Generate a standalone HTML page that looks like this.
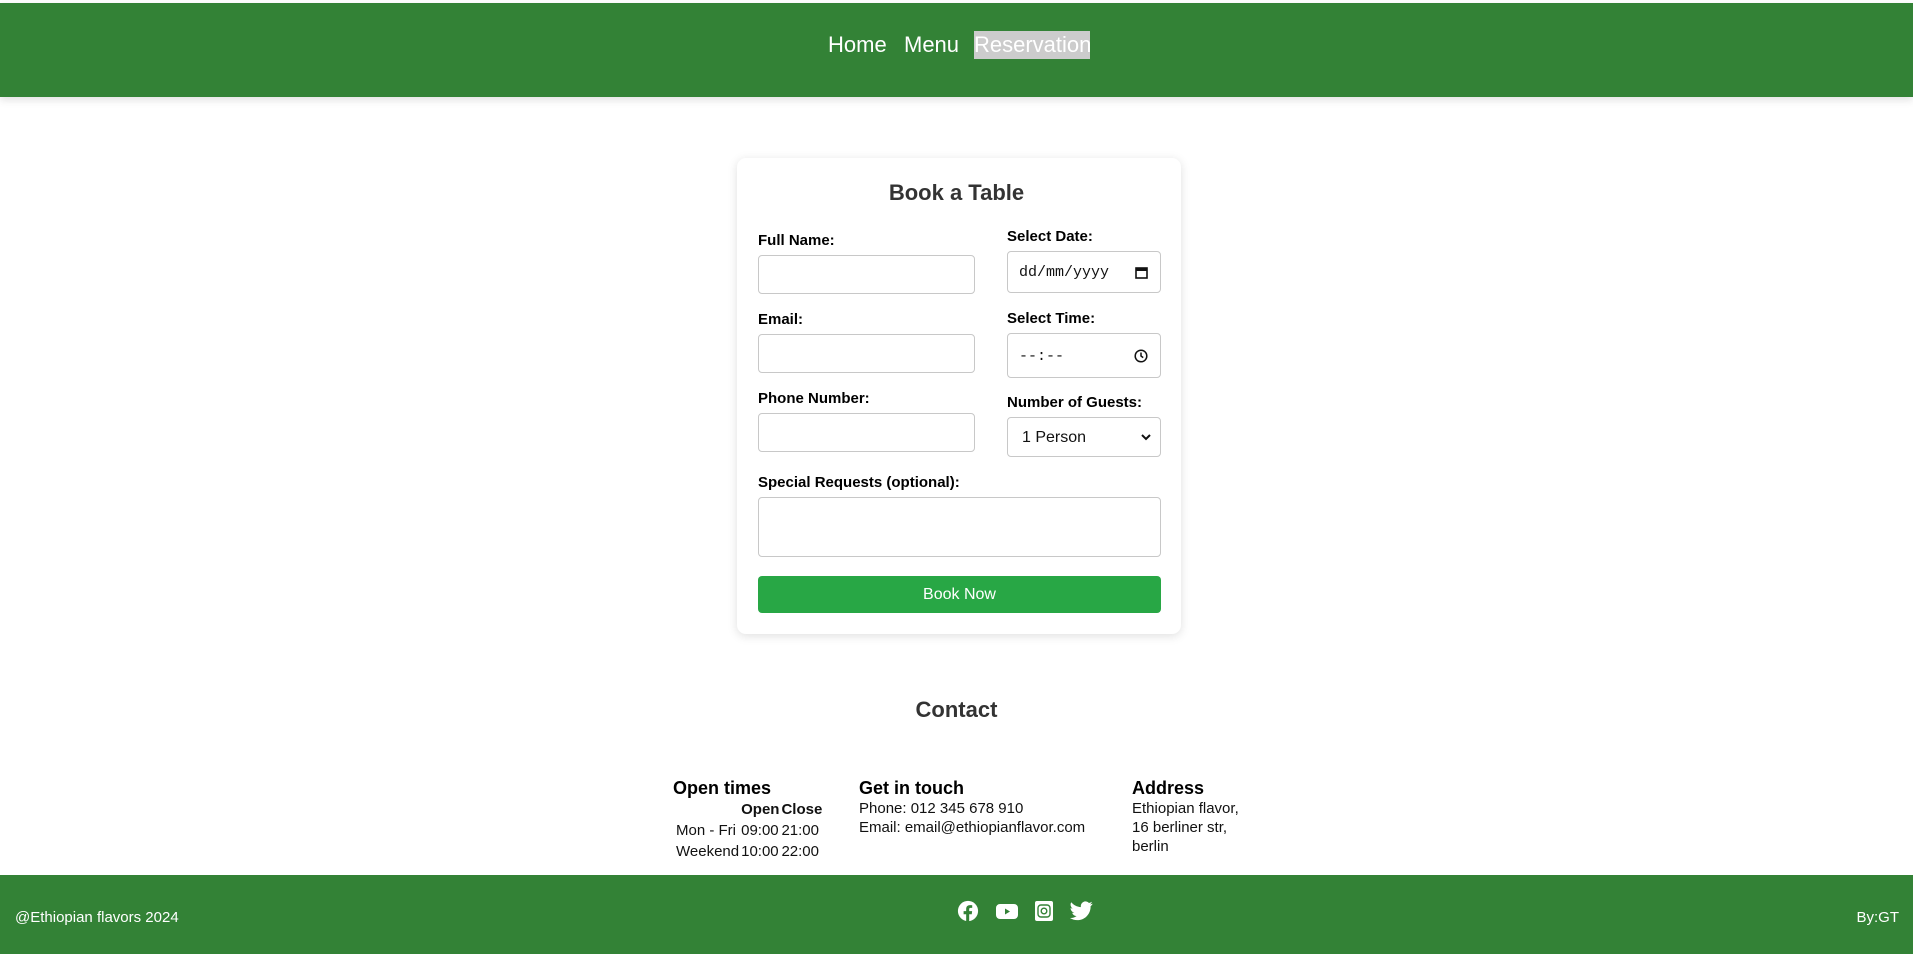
<!DOCTYPE html>
<html><head><meta charset="utf-8">
<style>
*{box-sizing:border-box;margin:0;padding:0}
html,body{width:1913px;height:954px;overflow:hidden;background:#fff;font-family:"Liberation Sans",Arial,sans-serif;}
.hdr{position:absolute;left:0;top:3px;width:1913px;height:94px;background:#338236;box-shadow:0 3px 8px rgba(0,0,0,0.12)}
.nav a{position:absolute;top:31px;height:28px;line-height:28px;font-size:22px;color:#fff;text-decoration:none}
.card{position:absolute;left:737px;top:158px;width:444px;height:476px;background:#fff;border-radius:9px;box-shadow:0 2px 10px rgba(0,0,0,0.13)}
h2{position:absolute;width:100%;text-align:center;font-size:22px;font-weight:bold;color:#333}
.lbl{position:absolute;font-size:15px;font-weight:bold;color:#000}
.inp{position:absolute;border:1px solid #c8c8c8;border-radius:4px;background:#fff}
.btn{position:absolute;left:758px;top:576px;width:403px;height:37px;background:#28a745;border-radius:4px;color:#fff;font-size:16px;text-align:center;line-height:37px}
.c{position:absolute;font-size:15px;color:#111;line-height:19px}
.c b{font-size:18px;display:block;line-height:22px;color:#000}
td,th{padding:0 1px}
.ftr{position:absolute;left:0;top:875px;width:1913px;height:79px;background:#338236;color:#fff;font-size:15px}
</style></head><body>
<div class="hdr"></div>
<div class="nav">
<a style="left:828px">Home</a>
<a style="left:904px">Menu</a>
<a style="left:974px;width:116px;background:#ccc;text-align:center">Reservation</a>
</div>

<div class="card"></div>
<h2 style="top:180px;left:0;width:1913px">Book a Table</h2>
<div class="lbl" style="left:758px;top:232px">Full Name:</div>
<div class="inp" style="left:758px;top:255px;width:217px;height:39px"></div>
<div class="lbl" style="left:758px;top:311px">Email:</div>
<div class="inp" style="left:758px;top:334px;width:217px;height:39px"></div>
<div class="lbl" style="left:758px;top:390px">Phone Number:</div>
<div class="inp" style="left:758px;top:413px;width:217px;height:39px"></div>

<div class="lbl" style="left:1007px;top:228px">Select Date:</div>
<div class="inp" style="left:1007px;top:251px;width:154px;height:42px;font-family:'Liberation Mono',monospace;font-size:15px;line-height:42px;padding-left:11px;color:#111">dd/mm/yyyy
<svg style="position:absolute;right:12px;top:14px" width="13" height="13" viewBox="0 0 13 13"><rect x="1" y="2" width="11" height="10" fill="none" stroke="#111" stroke-width="1.6"/><rect x="1" y="2" width="11" height="3" fill="#111"/></svg></div>
<div class="lbl" style="left:1007px;top:310px">Select Time:</div>
<div class="inp" style="left:1007px;top:333px;width:154px;height:45px;font-family:'Liberation Mono',monospace;font-size:15px;line-height:45px;padding-left:11px;color:#111">--:--
<svg style="position:absolute;right:12px;top:15px" width="14" height="14" viewBox="0 0 14 14"><circle cx="7" cy="7" r="5.8" fill="none" stroke="#111" stroke-width="1.5"/><path d="M7 3.5V7l2.2 1.6" fill="none" stroke="#111" stroke-width="1.5"/></svg></div>
<div class="lbl" style="left:1007px;top:394px">Number of Guests:</div>
<div class="inp" style="left:1007px;top:417px;width:154px;height:40px;font-size:16px;line-height:40px;padding-left:14px;color:#111">1 Person
<svg style="position:absolute;right:9px;top:15px" width="10" height="8" viewBox="0 0 10 8"><path d="M1 2l4 4 4-4" fill="none" stroke="#111" stroke-width="2"/></svg></div>

<div class="lbl" style="left:758px;top:474px">Special Requests (optional):</div>
<div class="inp" style="left:758px;top:497px;width:403px;height:60px"></div>
<div class="btn">Book Now</div>

<h2 style="top:697px;left:0;width:1913px">Contact</h2>
<div class="c" style="left:673px;top:777px"><b>Open times</b>
<table style="border-collapse:collapse;font-size:15px;line-height:21px;margin-left:2px">
<tr><th></th><th style="font-size:15px">Open</th><th style="font-size:15px">Close</th></tr>
<tr><td>Mon - Fri</td><td>09:00</td><td>21:00</td></tr>
<tr><td>Weekend</td><td>10:00</td><td>22:00</td></tr></table></div>
<div class="c" style="left:859px;top:777px"><b>Get in touch</b>Phone: 012 345 678 910<br>Email: email@ethiopianflavor.com</div>
<div class="c" style="left:1132px;top:777px"><b>Address</b>Ethiopian flavor,<br>16 berliner str,<br>berlin</div>

<div class="ftr">
<div style="position:absolute;left:15px;top:34px">@Ethiopian flavors 2024</div>
<div style="position:absolute;right:14px;top:34px">By:GT</div>
<svg style="position:absolute;left:957px;top:25px" width="22" height="22" viewBox="0 0 24 24"><circle cx="12" cy="12" r="11" fill="#fff"/><path d="M13.3 24v-8.5h2.8l.4-3.3h-3.2v-2c0-.9.3-1.6 1.6-1.6h1.7V5.7c-.3 0-1.3-.1-2.5-.1-2.5 0-4.1 1.5-4.1 4.2v2.4H7.2v3.3H10V24z" fill="#338236"/></svg>
<svg style="position:absolute;left:996px;top:26px" width="22" height="20" viewBox="0 0 22 20"><rect x="0" y="3" width="22" height="15" rx="4" fill="#fff"/><path d="M9 7.5v6l5-3z" fill="#338236"/></svg>
<svg style="position:absolute;left:1034px;top:25px" width="20" height="22" viewBox="0 0 20 22"><rect x="1" y="1" width="18" height="20" rx="2" fill="#fff"/><rect x="4" y="5" width="12" height="12" rx="3" fill="none" stroke="#338236" stroke-width="1.4"/><circle cx="10" cy="11" r="2.8" fill="none" stroke="#338236" stroke-width="1.4"/></svg>
<svg style="position:absolute;left:1070px;top:26px" width="23" height="20" viewBox="0 0 24 20"><path d="M23.6 2.3c-.9.4-1.8.6-2.8.8 1-.6 1.8-1.6 2.1-2.7-.9.6-2 1-3.1 1.2A4.9 4.9 0 0 0 11.4 6C7.3 5.8 3.7 3.8 1.3.9a4.9 4.9 0 0 0 1.5 6.6c-.8 0-1.6-.3-2.200-.6 0 2.4 1.700 4.400 3.900 4.800-.7.2-1.500.2-2.200.1.6 2 2.400 3.400 4.600 3.400A9.900 9.900 0 0 1 0 17.300 14 14 0 0 0 7.500 19.500c9.100 0 14-7.500 14-14v-.6c1-.7 1.800-1.600 2.100-2.600z" fill="#fff"/></svg>
</div>
</body></html>
